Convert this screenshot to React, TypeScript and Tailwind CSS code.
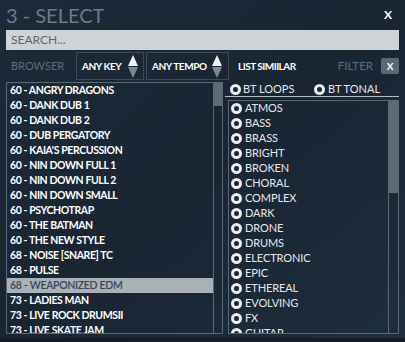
const leftItems = [
  "60 - ANGRY DRAGONS",
  "60 - DANK DUB 1",
  "60 - DANK DUB 2",
  "60 - DUB PERGATORY",
  "60 - KAIA'S PERCUSSION",
  "60 - NIN DOWN FULL 1",
  "60 - NIN DOWN FULL 2",
  "60 - NIN DOWN SMALL",
  "60 - PSYCHOTRAP",
  "60 - THE BATMAN",
  "60 - THE NEW STYLE",
  "68 - NOISE [SNARE] TC",
  "68 - PULSE",
  "68 - WEAPONIZED EDM",
  "73 - LADIES MAN",
  "73 - LIVE ROCK DRUMSII",
  "73 - LIVE SKATE JAM",
];

const tags = [
  "ATMOS",
  "BASS",
  "BRASS",
  "BRIGHT",
  "BROKEN",
  "CHORAL",
  "COMPLEX",
  "DARK",
  "DRONE",
  "DRUMS",
  "ELECTRONIC",
  "EPIC",
  "ETHEREAL",
  "EVOLVING",
  "FX",
  "GUITAR",
];

function Radio() {
  return (
    <span className="inline-block w-[11px] h-[11px] rounded-full border-[3px] border-[#eceef0] bg-[#1a2633] shrink-0" />
  );
}

function Stepper() {
  return (
    <div className="flex flex-col items-center gap-[1px]">
      <div className="w-0 h-0 border-l-[5.5px] border-r-[5.5px] border-b-[11px] border-l-transparent border-r-transparent border-b-[#eef0f2]" />
      <div className="w-0 h-0 border-l-[5.5px] border-r-[5.5px] border-t-[11px] border-l-transparent border-r-transparent border-t-[#7c8791]" />
    </div>
  );
}

export default function App() {
  return (
    <div
      className="w-[405px] h-[342px] overflow-hidden flex flex-col bg-gradient-to-br from-[#1d2a38] via-[#1a2532] to-[#1e2d3c] border-b-[4px] border-[#141c25]"
      style={{ fontFamily: "Lato, 'Open Sans', sans-serif" }}
    >
      <div className="h-[30px] flex items-center justify-between px-[6px]">
        <span className="text-[20px] text-[#6c7b89]">3 - SELECT</span>
        <span className="text-[12px] font-bold text-white pr-[7px]">X</span>
      </div>
      <div className="mx-[6px] h-[20px] bg-[#cfd3d6] flex items-center px-[5px] text-[12px] text-[#5b6671]">
        SEARCH...
      </div>
      <div className="h-[28px] mt-[2px] flex items-center pl-[11px] pr-[6px]">
        <span className="w-[65px] text-[11px] text-[#5d6c79]">BROWSER</span>
        <div className="w-[68px] h-[28px] border border-[#3d4a57] flex items-center justify-between pl-[5px] pr-[5px]">
          <span className="text-[10px] font-bold text-white tracking-[-0.4px]">ANY KEY</span>
          <Stepper />
        </div>
        <div className="ml-[2px] w-[83px] h-[28px] border border-[#3d4a57] flex items-center justify-between pl-[5px] pr-[6px]">
          <span className="text-[10px] font-bold text-white tracking-[-0.4px]">ANY TEMPO</span>
          <Stepper />
        </div>
        <span className="ml-[9px] text-[10px] font-bold text-white tracking-[-0.5px]">LIST SIMIILAR</span>
        <span className="ml-auto text-[11.5px] text-[#5d6c79]">FILTER</span>
        <span className="ml-[8px] w-[18px] h-[16px] rounded-[2px] bg-[#5b6975] flex items-center justify-center text-[10px] font-bold text-white">
          X
        </span>
      </div>
      <div className="flex mt-[2px] pl-[6px] pr-[6px] h-[252px]">
        <div className="w-[217px] h-full border border-[#5a6874] flex overflow-hidden">
          <div className="flex-1 flex flex-col">
            {leftItems.map((item) => {
              const active = item === "68 - WEAPONIZED EDM";
              return (
                <div
                  key={item}
                  className={
                    active
                      ? "h-[15px] shrink-0 flex items-center pl-[3px] bg-[#a9b0b6] text-[#35475a] text-[10.5px] font-semibold tracking-[-0.3px]"
                      : "h-[15px] shrink-0 flex items-center pl-[3px] text-white text-[10.5px] font-bold tracking-[-0.4px]"
                  }
                >
                  {item}
                </div>
              );
            })}
          </div>
          <div className="w-[9px] flex flex-col border-l border-[#5a6874]">
            <div className="h-[23px] bg-[#5d6b77]" />
          </div>
        </div>
        <div className="flex-1 ml-[2px] flex flex-col">
          <div className="h-[14px] flex items-center pl-[5px] text-[11px] text-[#e4e7ea]">
            <div className="w-[84px] flex items-center gap-[2px]">
              <Radio />
              <span>BT LOOPS</span>
            </div>
            <div className="flex items-center gap-[3px]">
              <Radio />
              <span>BT TONAL</span>
            </div>
          </div>
          <div className="h-[1px] bg-[#b6bec5]" />
          <div className="ml-[3px] mt-[3px] flex-1 border border-[#5a6874] flex overflow-hidden">
            <div className="flex-1 flex flex-col">
              {tags.map((t) => (
                <div
                  key={t}
                  className="h-[15px] shrink-0 flex items-center gap-[3px] pl-[2px] text-[11px] text-[#e4e7ea] tracking-[-0.1px]"
                >
                  <Radio />
                  <span>{t}</span>
                </div>
              ))}
            </div>
            <div className="w-[10px] flex flex-col border-l border-[#5a6874]">
              <div className="h-[92px] bg-[#5d6b77]" />
            </div>
          </div>
        </div>
      </div>
    </div>
  );
}
